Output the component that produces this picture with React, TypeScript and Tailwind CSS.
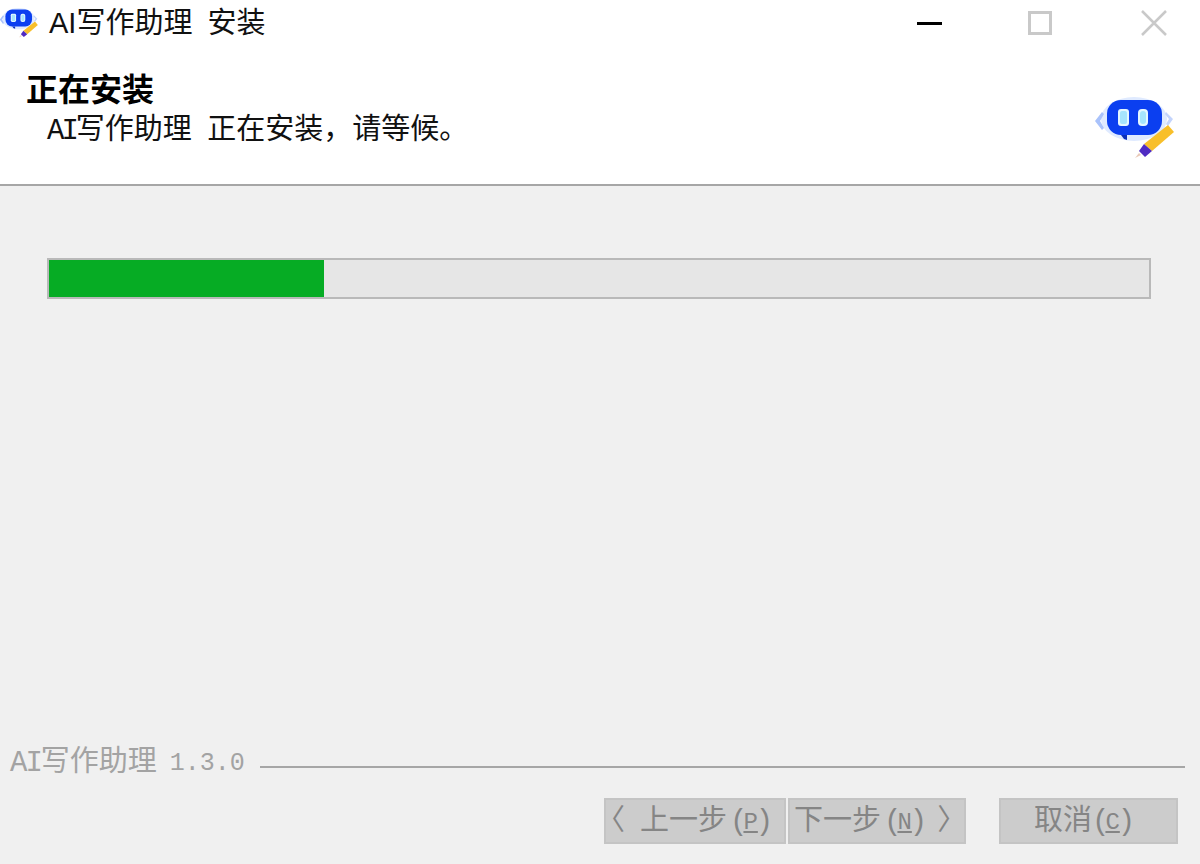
const cjk = "font-['Liberation_Sans','Noto_Sans_CJK_SC',sans-serif]";
const mono = "font-['Liberation_Mono','Noto_Sans_CJK_SC',monospace]";

function BotIcon({ className }: { className: string }) {
  return (
    <svg viewBox="0 0 80 62" className={className}>
      <ellipse cx="40" cy="22" rx="33" ry="22" fill="#dfeaff" />
      <path d="M8 15 L1 24 L8 33 L10 31 L6 24 L10 17 Z" fill="#a9c2fb" />
      <path d="M72 15 L79 22 L74 29 L72 27 L75 22 L71 17 Z" fill="#c3d4fc" />
      <path d="M27 38 L33 38 L33 43 L30 42 Z" fill="#0a2fb8" />
      <rect x="13" y="3" width="55" height="35" rx="14" fill="#0b3ff0" />
      <rect x="24" y="12" width="11" height="17" rx="3" fill="#e3f7ff" />
      <rect x="26" y="14" width="7" height="13" rx="2" fill="#a5e4fd" />
      <rect x="44" y="12" width="10" height="17" rx="4" fill="#e3f7ff" />
      <rect x="46" y="14" width="6" height="13" rx="3" fill="#a5e4fd" />
      <path d="M74 28 L80 35 L58 54 L50 47 Z" fill="#f8bf2a" />
      <path d="M50 47 L58 54 L51 60 L45 54 Z" fill="#4f2bc2" />
      <path d="M45 56 L47 58 L41 61 Z" fill="#e9c9b8" />
    </svg>
  );
}

function FooterButton({ children }: { children: React.ReactNode }) {
  return (
    <div className="flex h-[46px] items-center justify-start border-2 border-[#c4c4c4] bg-[#cccccc] pt-[3px] text-[29px] leading-none whitespace-pre text-[#858585]">
      {children}
    </div>
  );
}

function Hotkey({ letter, className }: { letter: string; className: string }) {
  return (
    <span className={`flex items-center ${className}`}>
      <span className="tracking-[-4px]">(</span>
      <u className="text-[24px]">{letter}</u>
      <span className="ml-[-2px]">)</span>
    </span>
  );
}

export default function App() {
  return (
    <div className={`flex h-[864px] w-[1200px] flex-col overflow-hidden bg-[#f0f0f0] ${cjk}`}>
      <div className="h-[184px] bg-white">
        <div className="flex h-[46px] items-center">
          <BotIcon className="ml-[-1px] h-[30px] w-[39px]" />
          <span className="ml-[11px] text-[29px] leading-none whitespace-pre text-[#111111] [word-spacing:7px]">AI写作助理 安装</span>
          <div className="ml-auto flex items-center">
            <div className="mr-[86px] h-[3px] w-[25px] bg-black" />
            <div className="mr-[89px] h-[24px] w-[24px] border-[3px] border-[#c9c9c9]" />
            <svg viewBox="0 0 26 26" className="mr-[33px] h-[26px] w-[26px]" stroke="#c9c9c9" strokeWidth="2.5" fill="none">
              <path d="M1 1 L25 25 M25 1 L1 25" />
            </svg>
          </div>
        </div>
        <div className="flex items-start justify-between">
          <div>
            <div className="mt-[26px] pl-[26px] text-[32px] leading-[36px] font-bold text-black">正在安装</div>
            <div className={`mt-[6px] pl-[47px] text-[29px] leading-[36px] whitespace-pre text-[#111111] ${mono}`}>
              <span className="tracking-[-3px]">AI</span>写作助理<span className="tracking-[-2px]"> </span>正在安装，请等候。
            </div>
          </div>
          <BotIcon className="mt-[51px] mr-[26px] h-[62px] w-[80px]" />
        </div>
      </div>

      <div className="h-[2px] bg-[#a6a6a6]" />

      <div className="flex flex-1 flex-col px-[47px] pt-[72px]">
        <div className="flex h-[41px] w-[1104px] border-2 border-[#b9b9b9] bg-[#e6e6e6]">
          <div className="h-full w-[275px] bg-[#06ac24]" />
        </div>
      </div>

      <div className={`flex items-center pr-[15px] pl-[10px] text-[#a3a3a3] ${mono}`}>
        <span className="-translate-y-[3px] text-[29px] leading-[36px] whitespace-pre">
          <span className="tracking-[-2px]">AI</span>写作助理
        </span>
        <span className="ml-[13px] -translate-y-[3px] text-[25px] leading-[36px]">1.3.0</span>
        <div className="ml-[15px] h-[2px] flex-1 bg-[#a6a6a6]" />
      </div>

      <div className={`mt-[13px] mb-[20px] flex pr-[22px] pl-[604px] ${mono}`}>
        <div className="w-[182px]">
          <FooterButton>
            <span className="ml-[-10px]">〈</span>
            <span className="ml-[15px]">上一步</span>
            <Hotkey letter="P" className="ml-[3px]" />
          </FooterButton>
        </div>
        <div className="ml-[2px] w-[178px]">
          <FooterButton>
            <span className="ml-[4px]">下一步</span>
            <Hotkey letter="N" className="ml-[3px]" />
            <span className="ml-[10px]">〉</span>
          </FooterButton>
        </div>
        <div className="ml-[33px] w-[179px]">
          <FooterButton>
            <span className="ml-[33px]">取消</span>
            <Hotkey letter="C" className="ml-0" />
          </FooterButton>
        </div>
      </div>
    </div>
  );
}
